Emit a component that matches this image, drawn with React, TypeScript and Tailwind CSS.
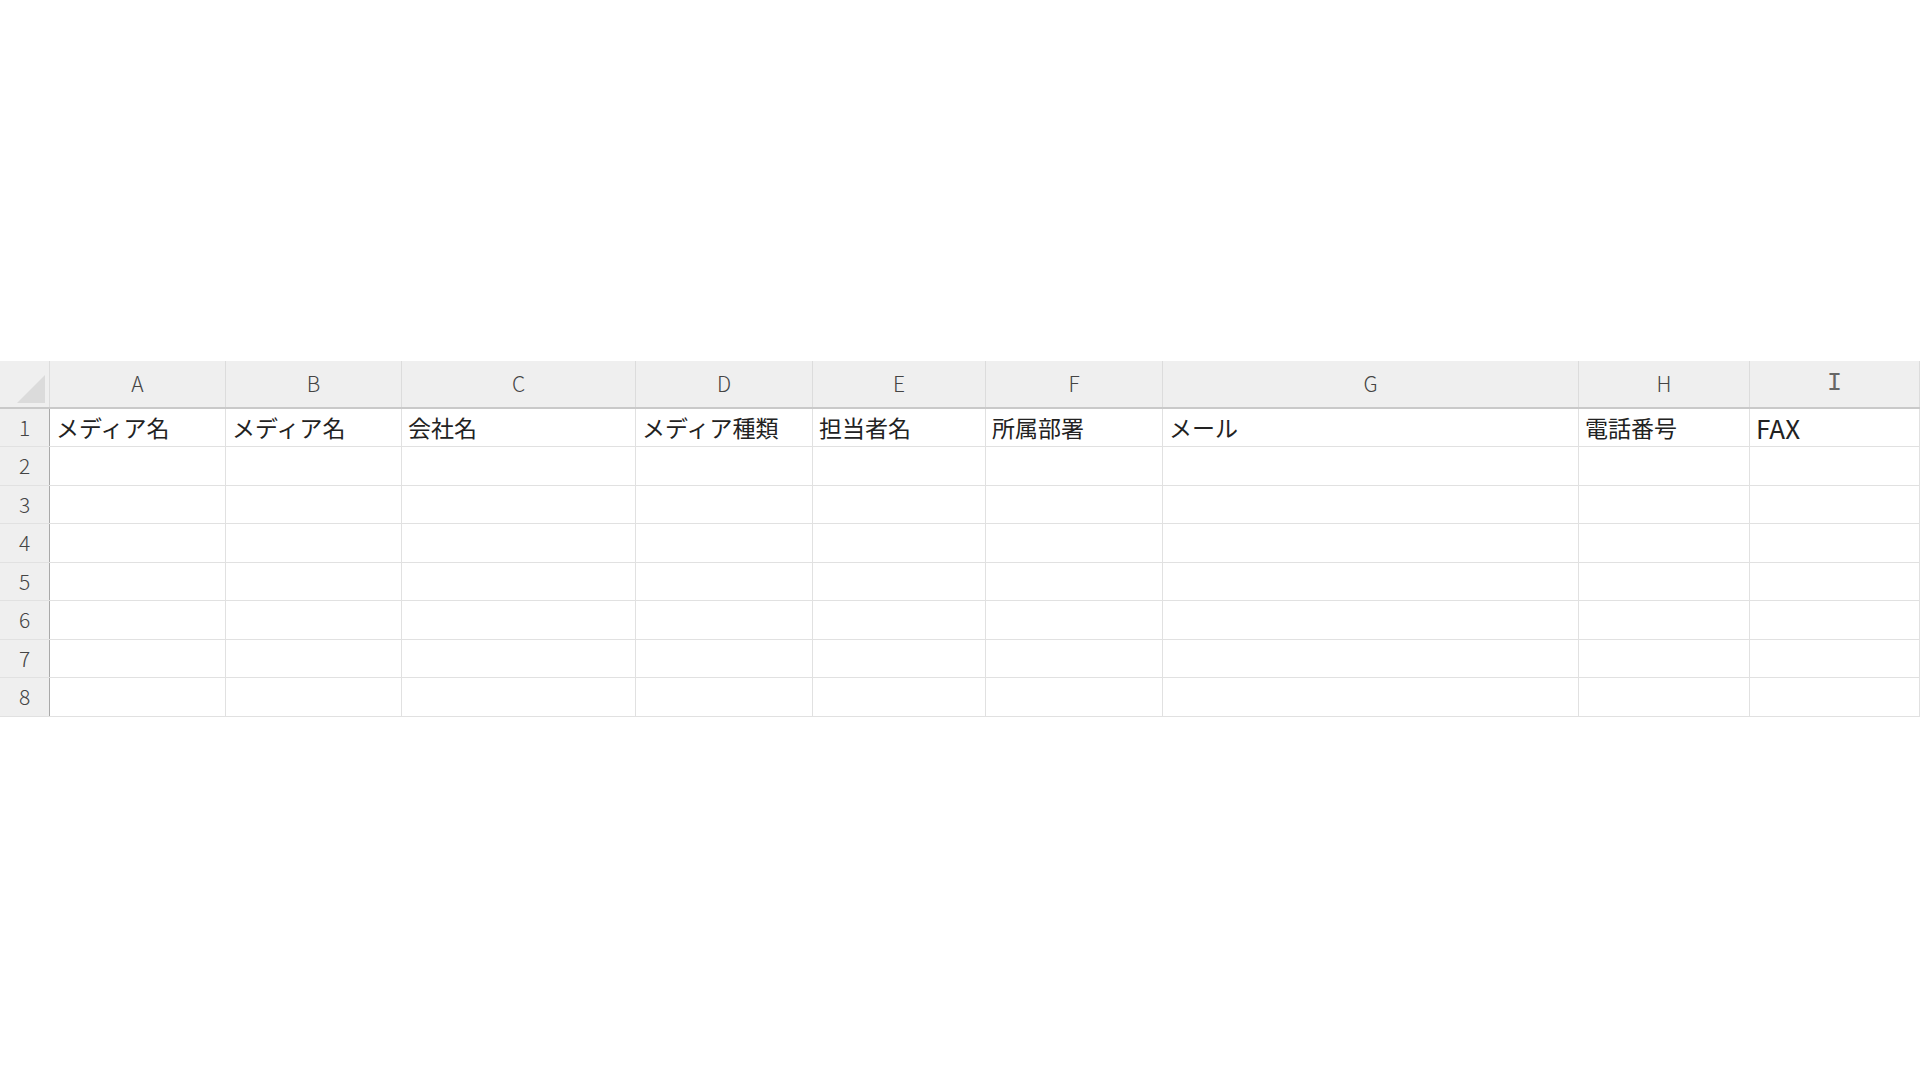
import React from "react";

const cols = [
  { l: "A", w: 176, t: "メディア名" },
  { l: "B", w: 176, t: "メディア名" },
  { l: "C", w: 234, t: "会社名" },
  { l: "D", w: 177, t: "メディア種類" },
  { l: "E", w: 173, t: "担当者名" },
  { l: "F", w: 177, t: "所属部署" },
  { l: "G", w: 416, t: "メール" },
  { l: "H", w: 171, t: "電話番号" },
  { l: "I", w: 170, t: "FAX" },
];

const font = { fontFamily: '"Noto Sans CJK JP", "Noto Sans", sans-serif' };

export default function App() {
  const rows = [1, 2, 3, 4, 5, 6, 7, 8];
  return (
    <div className="w-[1920px] h-[1080px] bg-white overflow-hidden" style={font}>
      <div className="h-[361px]" />
      {/* header row */}
      <div className="flex h-[48px] bg-[#efefef] border-b-2 border-[#c9c9c9]">
        <div className="w-[50px] shrink-0 relative border-r border-[#dcdcdc]">
          <div className="absolute right-[4px] bottom-[4px] w-[28px] h-[28px] bg-[#dbdbdb] [clip-path:polygon(100%_0,100%_100%,0_100%)]" />
        </div>
        {cols.map((c, i) => (
          <div
            key={c.l}
            className={`shrink-0 flex items-center justify-center text-[21px] font-light text-[#444] border-r border-[#dcdcdc] ${i === cols.length - 1 ? "grow" : ""}`}
            style={{ width: c.w }}
          >
            {c.l === "I" ? (
              <span className="font-['Liberation_Mono',monospace] font-normal text-[25px] text-[#666]">I</span>
            ) : (
              c.l
            )}
          </div>
        ))}
      </div>
      {rows.map((r) => (
        <div key={r} className={`flex border-b border-[#e1e1e1] ${r % 2 === 0 ? "h-[39px]" : "h-[38px]"}`}>
          <div className="w-[50px] shrink-0 bg-[#efefef] border-r border-[#a9a9a9] flex items-center justify-center text-[21px] font-light text-[#444]">
            {r}
          </div>
          {cols.map((c, i) => (
            <div
              key={c.l}
              className={`shrink-0 flex items-center pl-[6px] text-[#222] border-r border-[#e1e1e1] whitespace-nowrap ${c.l === "I" ? "text-[26px]" : "text-[23px]"} ${i === cols.length - 1 ? "grow" : ""}`}
              style={{ width: c.w }}
            >
              {r === 1 ? c.t : ""}
            </div>
          ))}
        </div>
      ))}
    </div>
  );
}
